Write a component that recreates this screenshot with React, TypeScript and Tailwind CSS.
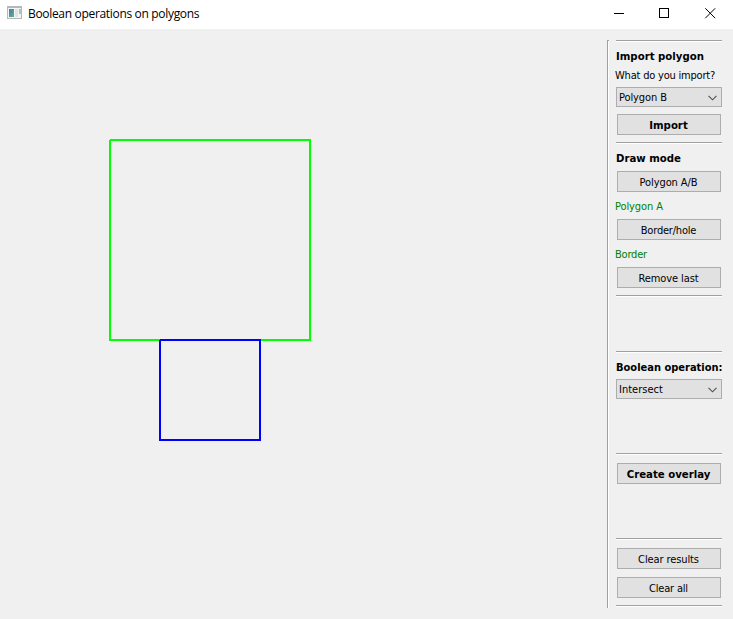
import React from "react";

const base = "font-['DejaVu_Sans_Condensed','DejaVu_Sans',sans-serif] leading-[14px] whitespace-nowrap";
const regular = base + " text-[11px] tracking-[-0.2px]";
const caption = base + " text-[11px] tracking-[-0.1px]";
const bold = base + " text-[11.3px] font-bold";

function Rule({ className = "" }: { className?: string }) {
  return <div className={`h-[2px] w-[106px] shrink-0 border-b border-t border-b-white border-t-[#a0a0a0] ${className}`} />;
}

function Button({ label, text, className = "" }: { label: string; text: string; className?: string }) {
  return (
    <button className={`mx-px flex h-[21px] w-[104px] shrink-0 items-center justify-center border border-[#adadad] bg-[#e1e1e1] pt-[2px] pr-px ${className}`}>
      <span className={text}>{label}</span>
    </button>
  );
}

function Combo({ label, text, className = "" }: { label: string; text: string; className?: string }) {
  return (
    <div className={`flex h-5 w-[106px] shrink-0 items-center justify-between border border-[#adadad] bg-[#e1e1e1] pl-[2px] pr-[4px] ${className}`}>
      <span className={`${text} pt-[2px]`}>{label}</span>
      <svg className="mt-px" width="9" height="6" viewBox="0 0 9 6" fill="none" stroke="#505050" strokeWidth="1.1">
        <path d="M0.5 0.8L4.5 4.8L8.5 0.8" />
      </svg>
    </div>
  );
}

export default function App() {
  return (
    <div className="flex h-[619px] w-[733px] flex-col overflow-hidden bg-[#f0f0f0] text-black">
      <header className="flex h-[29px] shrink-0 items-start bg-white pl-[7px]">
        <svg className="mt-[6px] shrink-0" width="16" height="14" viewBox="0 0 16 14">
          <defs>
            <linearGradient id="screen" x1="0" y1="0" x2="1" y2="1">
              <stop offset="0" stopColor="#4779ad" />
              <stop offset="1" stopColor="#5cb587" />
            </linearGradient>
          </defs>
          <rect x="0.5" y="0.5" width="14" height="12" fill="#f4f4f4" stroke="#b5b8ba" />
          <path d="M0 1H15" stroke="#b5b8ba" strokeWidth="2" />
          <rect x="2" y="3" width="5" height="8" fill="url(#screen)" />
          <rect x="8" y="3" width="3" height="8" fill="#e2e2e2" />
          <rect x="12" y="3" width="2" height="5" fill="url(#screen)" opacity="0.5" />
        </svg>
        <h1 className="ml-[5px] mt-[6px] whitespace-nowrap font-['Open_Sans','Noto_Sans',sans-serif] text-[12px] leading-4 tracking-[-0.32px]">
          Boolean operations on polygons
        </h1>
        <div className="ml-auto flex shrink-0 pr-[17px] pt-[8px]">
          <svg width="102" height="11" viewBox="0 0 102 11" fill="none" stroke="#000" strokeWidth="1">
            <path d="M0 5.5H10" />
            <rect x="45.5" y="0.5" width="9" height="9" />
            <path d="M91.3 0.3L101.2 10.2M101.2 0.3L91.3 10.2" />
          </svg>
        </div>
      </header>
      <main className="flex min-h-0 flex-1">
        <svg className="shrink-0" width="607" height="590" viewBox="0 29 607 590" fill="none" strokeWidth="2">
          <path d="M110 140H310V341" stroke="#00ff00" />
          <path d="M110 140V340H311" stroke="#00ff00" />
          <path d="M160 340H260V441" stroke="#0000ff" />
          <path d="M160 340V440H261" stroke="#0000ff" />
        </svg>
        <div className="mt-[11px] flex h-[568px] w-[2px] shrink-0 border-l border-r border-l-[#a0a0a0] border-r-white">
          <div className="-mr-px h-px w-px shrink-0 bg-[#a0a0a0]" />
        </div>
        <aside className="ml-[7px] flex w-[106px] shrink-0 flex-col pt-[11px]">
          <Rule />
          <h2 className={`${bold} mt-[8px]`}>Import polygon</h2>
          <p className={`${regular} -ml-px mt-[5px]`}>What do you import?</p>
          <Combo label="Polygon B" text={caption} className="mt-[4px]" />
          <Button label="Import" text={bold} className="mt-[7px]" />
          <Rule className="mt-[7px]" />
          <h2 className={`${bold} mt-[8px]`}>Draw mode</h2>
          <Button label="Polygon A/B" text={caption} className="mt-[5px]" />
          <p className={`${caption} -ml-px mt-[8px] text-[#008000]`}>Polygon A</p>
          <Button label="Border/hole" text={regular} className="mt-[5px]" />
          <p className={`${regular} -ml-px mt-[8px] text-[#008000]`}>Border</p>
          <Button label="Remove last" text={caption} className="mt-[5px]" />
          <Rule className="mt-[7px]" />
          <Rule className="mt-[54px]" />
          <h2 className={`${base} mt-[8px] text-[11px] font-bold`}>Boolean operation:</h2>
          <Combo label="Intersect" text={`${base} text-[11px]`} className="mt-[4px]" />
          <Rule className="mt-[54px]" />
          <Button label="Create overlay" text={bold} className="mt-[8px]" />
          <Rule className="mt-[54px]" />
          <Button label="Clear results" text={caption} className="mt-[8px]" />
          <Button label="Clear all" text={regular} className="mt-[8px]" />
          <Rule className="mt-[7px]" />
        </aside>
      </main>
    </div>
  );
}
